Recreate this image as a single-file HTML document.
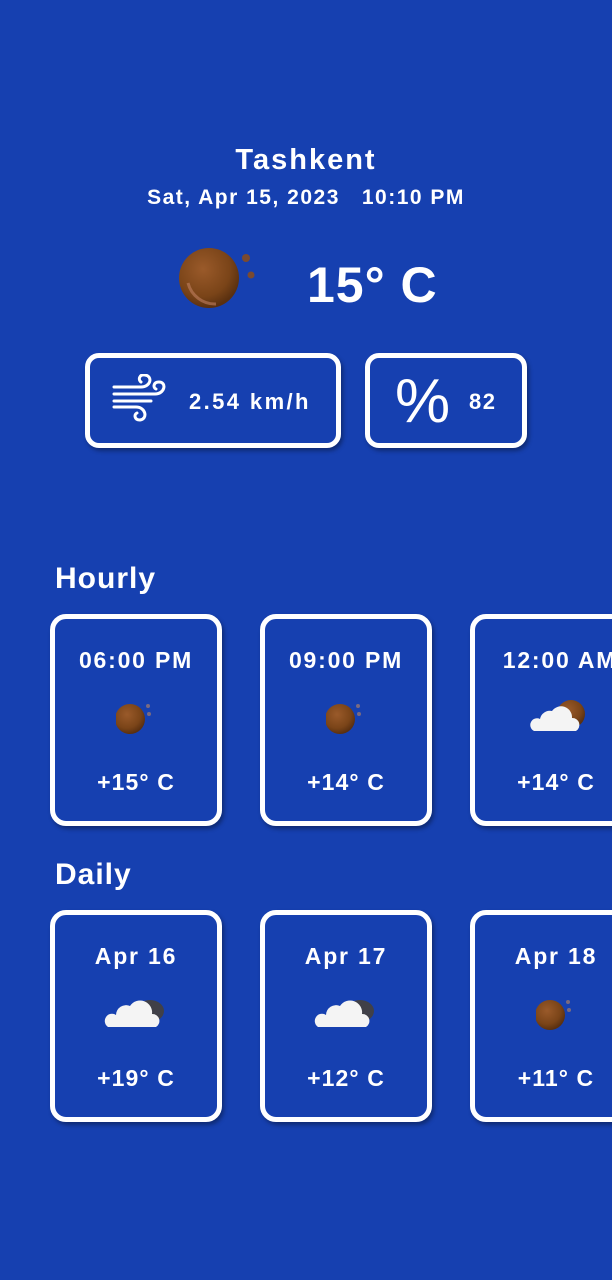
<!DOCTYPE html>
<html><head><meta charset="utf-8"><style>
body{margin:0;width:612px;height:1280px;background:#1640b0;font-family:"Liberation Sans",sans-serif;color:#fff;position:relative;overflow:hidden;font-weight:bold}
.a{position:absolute}
.c{text-align:center}
.box{position:absolute;border:5px solid #fff;border-radius:14px;box-sizing:border-box;box-shadow:2px 3px 4px rgba(0,0,0,.35)}
.card{position:absolute;width:172px;height:212px;border:5px solid #fff;border-radius:16px;box-sizing:border-box;box-shadow:2px 3px 4px rgba(0,0,0,.35)}
.card .t{position:absolute;top:28px;width:100%;text-align:center;font-size:23px;letter-spacing:1.8px}
.card .b{position:absolute;top:150px;width:100%;text-align:center;font-size:23px;letter-spacing:1.1px}
.card svg{position:absolute;left:50%;top:80px;transform:translateX(-50%)}
</style></head><body>
<svg width="0" height="0" style="position:absolute"><defs>
<radialGradient id="m" cx="40%" cy="35%" r="65%"><stop offset="0" stop-color="#9a5a2a"/><stop offset=".7" stop-color="#7a4418"/><stop offset="1" stop-color="#5a3010"/></radialGradient>
</defs></svg>
<div class="a c" style="top:144px;width:612px;font-size:29px;letter-spacing:2px">Tashkent</div>
<div class="a c" style="top:186px;width:612px;font-size:21px;letter-spacing:1.5px">Sat, Apr 15, 2023&nbsp;&nbsp; 10:10 PM</div>
<svg class="a" style="left:178px;top:248px" width="84" height="62"><circle cx="31" cy="30" r="30" fill="url(#m)"/><path d="M10 35 A28 28 0 0 0 38 56" stroke="#c08060" stroke-width="3" fill="none" opacity=".6"/><circle cx="68" cy="10" r="4" fill="#7a4a30"/><circle cx="73" cy="27" r="3.5" fill="#7a4a30"/></svg>
<div class="a" style="left:307px;top:256px;font-size:50px;letter-spacing:1px">15° C</div>
<div class="box" style="left:85px;top:353px;width:256px;height:95px"></div>
<svg class="a" style="left:111px;top:374px" width="58" height="50" fill="none" stroke="#fff" stroke-width="3" stroke-linecap="round"><path d="M3 13 H30 C40 13 42 2 34 1 C28 0 27 6 30 8"/><path d="M3 20 H44 C54 20 56 8 48 8 C42 8 42 14 45 15"/><path d="M3 27 H40"/><path d="M3 33 H25 C35 33 37 45 29 46 C23 46 23 40 26 39"/></svg>
<div class="a" style="left:189px;top:389px;font-size:22px;letter-spacing:2.4px">2.54 km/h</div>
<div class="box" style="left:365px;top:353px;width:162px;height:95px"></div>
<div class="a" style="left:395px;top:366px;font-size:62px;font-weight:normal">%</div>
<div class="a" style="left:469px;top:389px;font-size:22px;letter-spacing:1.5px">82</div>
<div class="a" style="left:55px;top:562px;font-size:30px;letter-spacing:1px">Hourly</div>
<div class="card" style="left:50px;top:614px"><div class="t">06:00 PM</div><svg width="40" height="34" style="top:82px"><circle cx="14" cy="18" r="15" fill="url(#m)"/><circle cx="32" cy="5" r="2" fill="#7a6a80"/><circle cx="33" cy="13" r="2" fill="#7a6a80"/></svg><div class="b">+15° C</div></div>
<div class="card" style="left:260px;top:614px"><div class="t">09:00 PM</div><svg width="40" height="34" style="top:82px"><circle cx="14" cy="18" r="15" fill="url(#m)"/><circle cx="32" cy="5" r="2" fill="#7a6a80"/><circle cx="33" cy="13" r="2" fill="#7a6a80"/></svg><div class="b">+14° C</div></div>
<div class="card" style="left:470px;top:614px"><div class="t" style="left:4px">12:00 AM</div><svg width="60" height="36" style="margin-left:2px;top:80px"><circle cx="43" cy="15" r="14" fill="url(#m)"/><path d="M6 32 H48 A7 7 0 0 0 44 19 A11 11 0 0 0 24 12 A10 10 0 0 0 12 20 A6 6 0 0 0 6 32 Z" fill="#f4f4f4"/></svg><div class="b">+14° C</div></div>
<div class="a" style="left:55px;top:858px;font-size:30px;letter-spacing:1px">Daily</div>
<div class="card" style="left:50px;top:910px"><div class="t">Apr 16</div><svg width="64" height="36"><ellipse cx="46" cy="16" rx="14" ry="11" fill="#404048"/><path d="M4 32 H52 A7 7 0 0 0 48 19 A12 12 0 0 0 26 11 A10 10 0 0 0 12 20 A6 6 0 0 0 4 32 Z" fill="#f4f4f4"/></svg><div class="b">+19° C</div></div>
<div class="card" style="left:260px;top:910px"><div class="t">Apr 17</div><svg width="64" height="36"><ellipse cx="46" cy="16" rx="14" ry="11" fill="#404048"/><path d="M4 32 H52 A7 7 0 0 0 48 19 A12 12 0 0 0 26 11 A10 10 0 0 0 12 20 A6 6 0 0 0 4 32 Z" fill="#f4f4f4"/></svg><div class="b">+12° C</div></div>
<div class="card" style="left:470px;top:910px"><div class="t">Apr 18</div><svg width="40" height="34" style="top:82px"><circle cx="14" cy="18" r="15" fill="url(#m)"/><circle cx="32" cy="5" r="2" fill="#7a6a80"/><circle cx="33" cy="13" r="2" fill="#7a6a80"/></svg><div class="b">+11° C</div></div>
</body></html>
